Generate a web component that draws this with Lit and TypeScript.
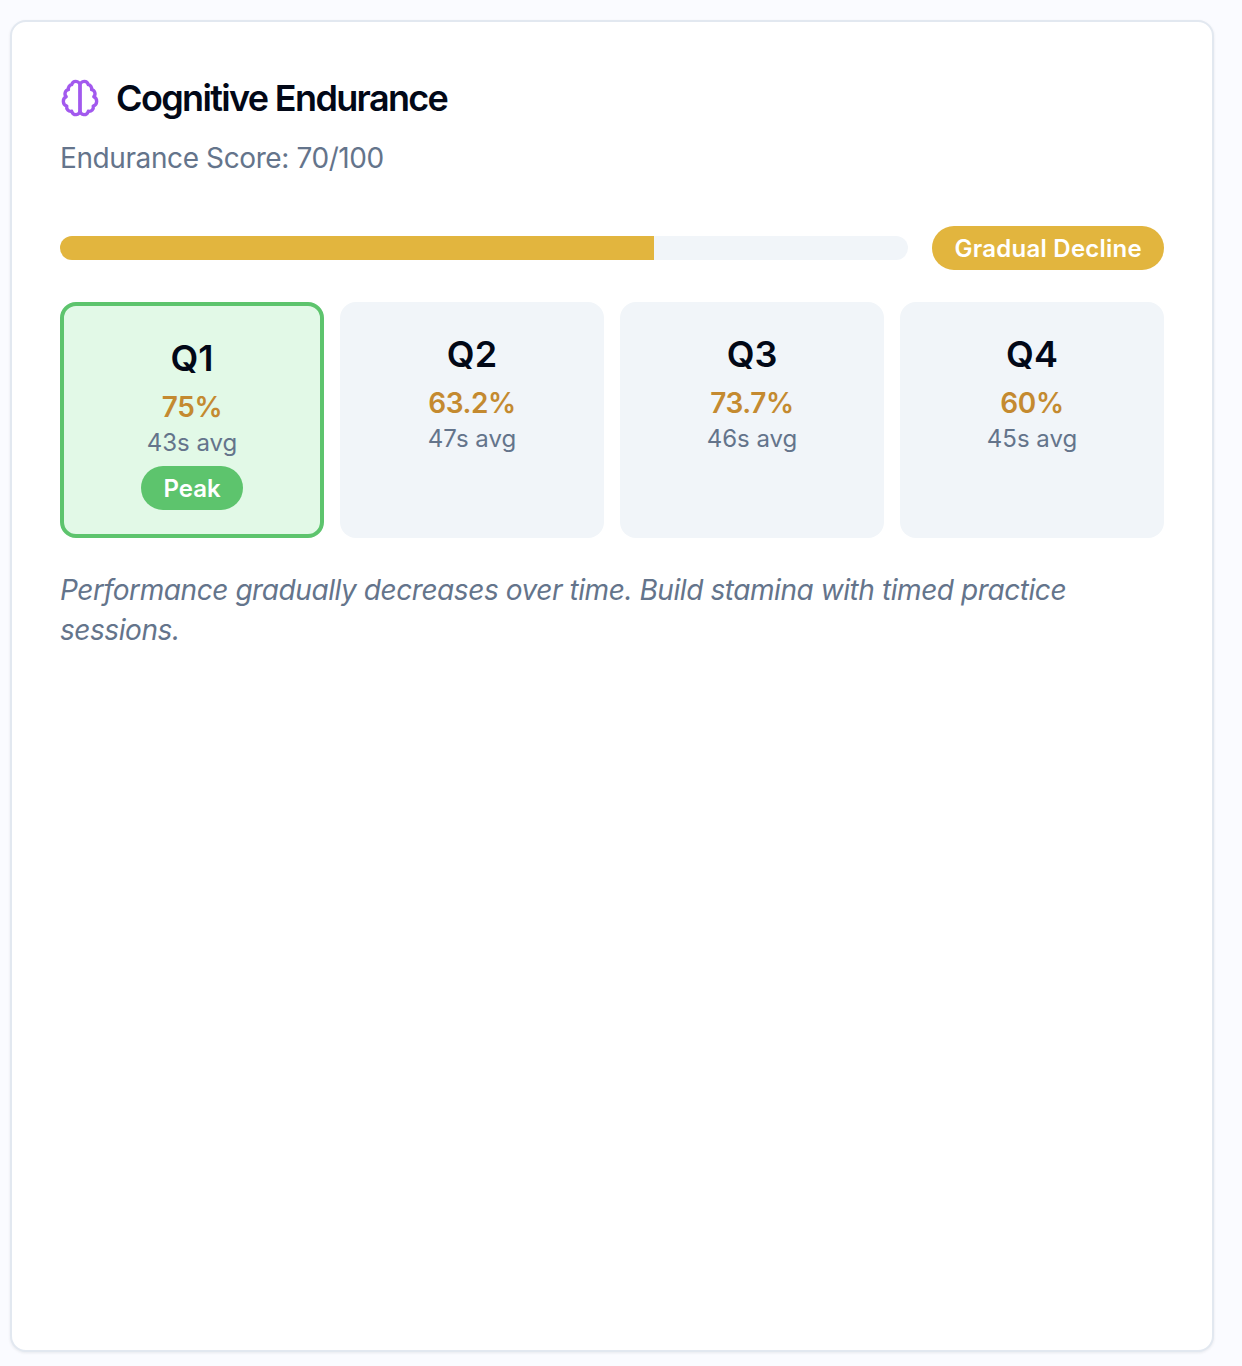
import { LitElement, html, css } from 'lit';
import { customElement } from 'lit/decorators.js';
import { classMap } from 'lit/directives/class-map.js';

interface Quarter {
  label: string;
  accuracy: string;
  avg: string;
  peak?: boolean;
}

const QUARTERS: Quarter[] = [
  { label: 'Q1', accuracy: '75%', avg: '43s avg', peak: true },
  { label: 'Q2', accuracy: '63.2%', avg: '47s avg' },
  { label: 'Q3', accuracy: '73.7%', avg: '46s avg' },
  { label: 'Q4', accuracy: '60%', avg: '45s avg' },
];

const SCORE = 70;

@customElement('app-root')
export class AppRoot extends LitElement {
  static styles = css`
    :host {
      display: block;
      box-sizing: border-box;
      min-height: 1366px;
      padding: 20px 28px 14px 10px;
      background: #fafbff;
      font-family: Inter, 'Liberation Sans', sans-serif;
      color: #020817;
    }

    .card {
      box-sizing: border-box;
      min-height: 1332px;
      padding: 48px;
      background: #ffffff;
      border: 2px solid #e2e8f0;
      border-radius: 16px;
      box-shadow: 0 1px 3px rgba(15, 23, 42, 0.08);
    }

    .title-row {
      display: flex;
      align-items: center;
      gap: 16px;
      height: 56px;
    }

    .title-row svg {
      width: 40px;
      height: 40px;
      flex: none;
      fill: none;
      stroke: #a259ee;
      stroke-width: 2;
      stroke-linecap: round;
      stroke-linejoin: round;
    }

    h1 {
      margin: 0;
      font-size: 36px;
      line-height: 56px;
      font-weight: 600;
      letter-spacing: -1.65px;
      color: #020817;
    }

    .score {
      margin: 12px 0 0;
      font-size: 28px;
      line-height: 40px;
      letter-spacing: -0.4px;
      color: #64748b;
    }

    .progress-row {
      display: flex;
      align-items: center;
      gap: 24px;
      margin-top: 48px;
    }

    .track {
      flex: 1;
      height: 24px;
      background: #f1f5f9;
      border-radius: 12px;
      overflow: hidden;
    }

    .fill {
      height: 100%;
      background: #e2b53e;
    }

    .badge {
      padding: 0 22px;
      height: 44px;
      line-height: 46px;
      font-size: 24px;
      font-weight: 600;
      letter-spacing: 0.25px;
      color: #ffffff;
      background: #e2b53e;
      border-radius: 22px;
      white-space: nowrap;
    }

    .quarters {
      display: grid;
      grid-template-columns: repeat(4, 1fr);
      gap: 16px;
      margin-top: 32px;
    }

    .quarter {
      display: flex;
      flex-direction: column;
      align-items: center;
      padding: 24px;
      background: #f1f5f9;
      border-radius: 16px;
    }

    .quarter.peak {
      background: #e2f9e7;
      border: 4px solid #5dc46d;
    }

    .label {
      font-size: 36px;
      line-height: 56px;
      font-weight: 600;
      color: #020817;
    }

    .accuracy {
      font-size: 28px;
      line-height: 42px;
      font-weight: 600;
      letter-spacing: -0.4px;
      color: #c48a30;
    }

    .avg {
      font-size: 24px;
      line-height: 30px;
      color: #64748b;
    }

    .peak-tag {
      margin-top: 8px;
      padding: 0 22px;
      height: 44px;
      line-height: 46px;
      font-size: 24px;
      font-weight: 600;
      color: #ffffff;
      background: #5dc46d;
      border-radius: 22px;
    }

    .note {
      margin: 32px 0 0;
      font-size: 28px;
      line-height: 40px;
      font-style: italic;
      letter-spacing: -0.43px;
      color: #64748b;
    }
  `;

  render() {
    return html`
      <section class="card">
        <div class="title-row">
          <svg viewBox="0 0 24 24">
            <path d="M9.5 2A2.5 2.5 0 0 1 12 4.5v15a2.5 2.5 0 0 1-4.96.44 2.5 2.5 0 0 1-2.96-3.08 3 3 0 0 1-.34-5.58 2.5 2.5 0 0 1 1.32-4.24 2.5 2.5 0 0 1 1.98-3A2.5 2.5 0 0 1 9.5 2Z" />
            <path d="M14.5 2A2.5 2.5 0 0 0 12 4.5v15a2.5 2.5 0 0 0 4.96.44 2.5 2.5 0 0 0 2.96-3.08 3 3 0 0 0 .34-5.58 2.5 2.5 0 0 0-1.32-4.24 2.5 2.5 0 0 0-1.98-3A2.5 2.5 0 0 0 14.5 2Z" />
          </svg>
          <h1>Cognitive Endurance</h1>
        </div>
        <p class="score">Endurance Score: ${SCORE}/100</p>

        <div class="progress-row">
          <div class="track">
            <div class="fill" style="width: ${SCORE}%"></div>
          </div>
          <span class="badge">Gradual Decline</span>
        </div>

        <div class="quarters">
          ${QUARTERS.map(
            (q) => html`
              <div class=${classMap({ quarter: true, peak: !!q.peak })}>
                <span class="label">${q.label}</span>
                <span class="accuracy">${q.accuracy}</span>
                <span class="avg">${q.avg}</span>
                ${q.peak ? html`<span class="peak-tag">Peak</span>` : null}
              </div>
            `
          )}
        </div>

        <p class="note">
          Performance gradually decreases over time. Build stamina with timed practice sessions.
        </p>
      </section>
    `;
  }
}
